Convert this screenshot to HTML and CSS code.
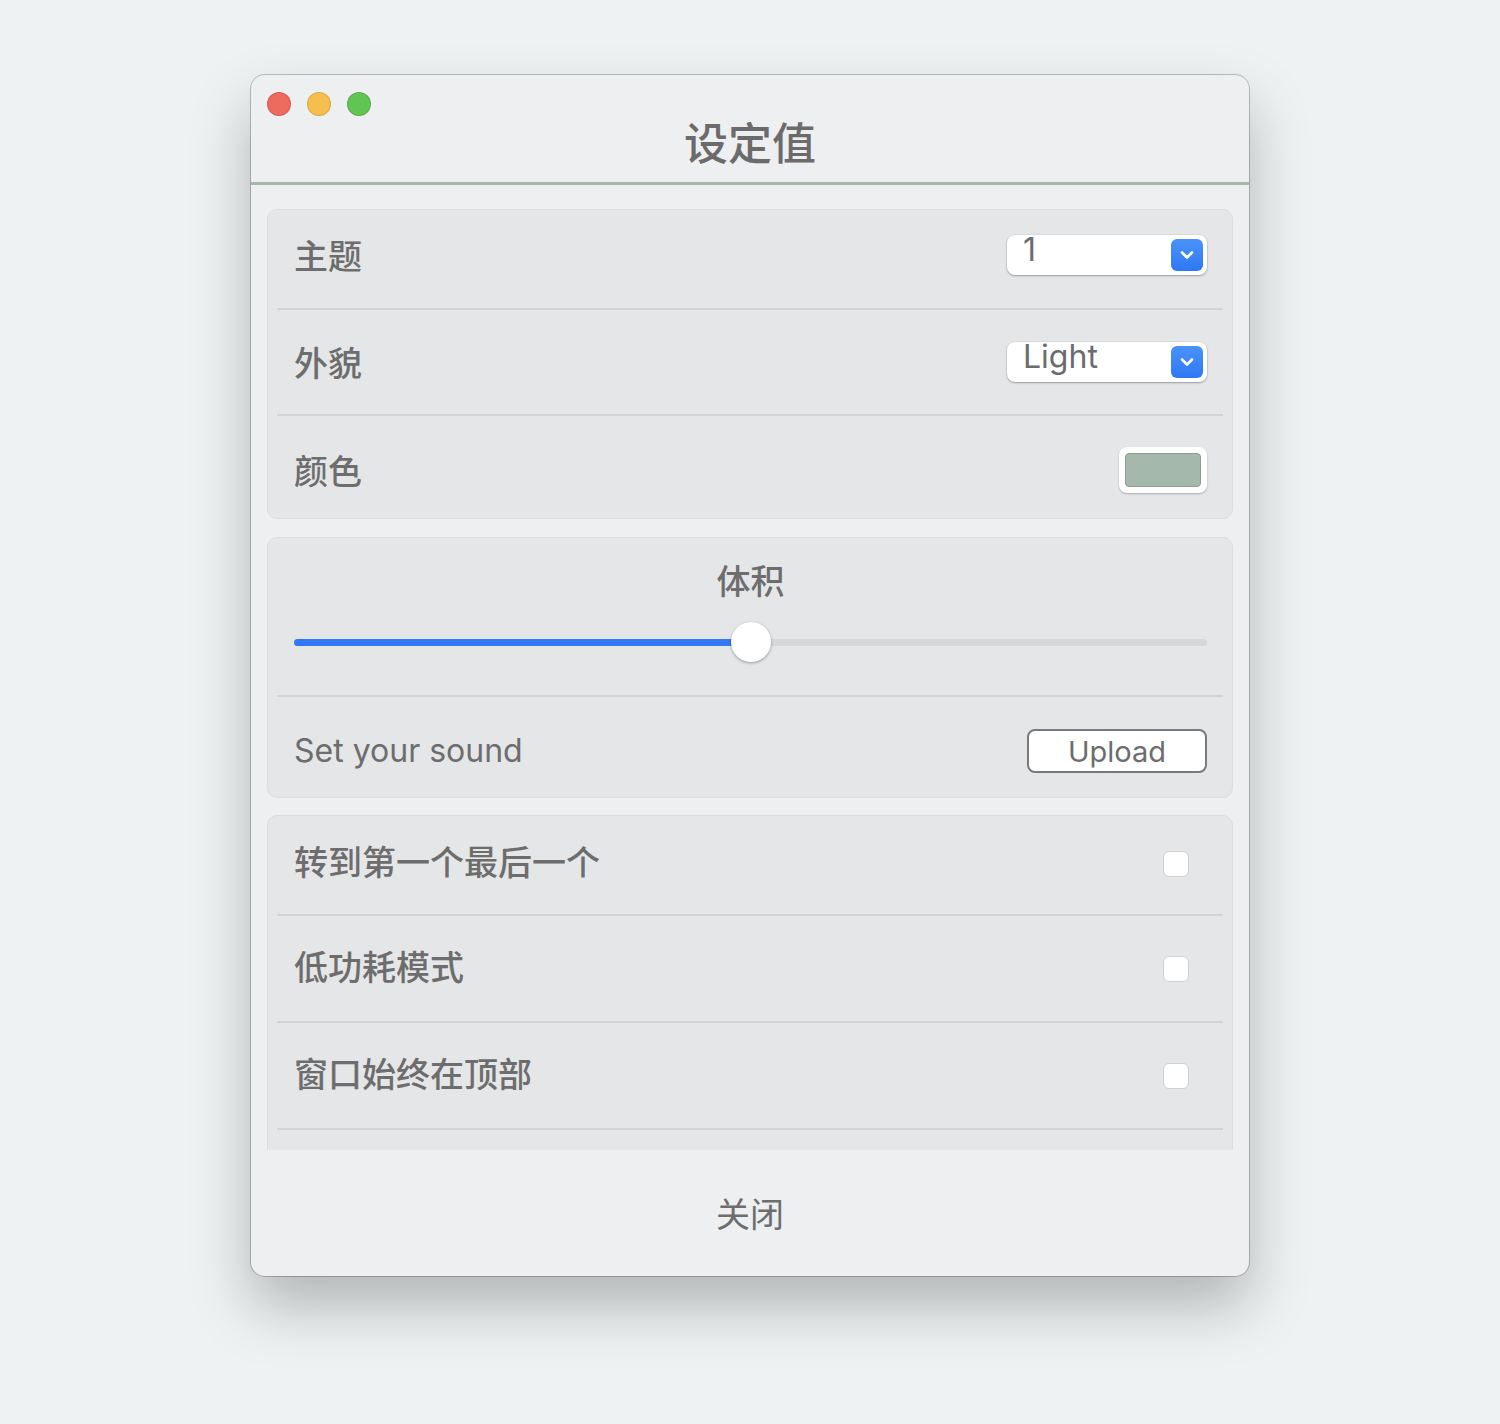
FILE: index.html
```html
<!DOCTYPE html>
<html lang="zh">
<head>
  <meta charset="UTF-8">
  <title>设定值</title>
  <link rel="stylesheet" href="styles.css">
</head>
<body>
  <div class="window">
    <div class="header">
      <div class="lights">
        <span class="light red"></span>
        <span class="light yellow"></span>
        <span class="light green"></span>
      </div>
      <h1 class="title">设定值</h1>
    </div>

    <div class="content">
      <div class="section">
        <div class="row">
          <span class="label">主题</span>
          <div class="select">
            <span class="select-value">1</span>
            <span class="select-arrow">
              <svg width="18" height="12" viewBox="0 0 18 12"><path d="M4 3.5l5 5 5-5" fill="none" stroke="#fff" stroke-width="2.6" stroke-linecap="round" stroke-linejoin="round"/></svg>
            </span>
          </div>
        </div>
        <div class="row">
          <span class="label">外貌</span>
          <div class="select">
            <span class="select-value">Light</span>
            <span class="select-arrow">
              <svg width="18" height="12" viewBox="0 0 18 12"><path d="M4 3.5l5 5 5-5" fill="none" stroke="#fff" stroke-width="2.6" stroke-linecap="round" stroke-linejoin="round"/></svg>
            </span>
          </div>
        </div>
        <div class="row">
          <span class="label">颜色</span>
          <div class="swatch"><span class="swatch-fill"></span></div>
        </div>
      </div>

      <div class="section">
        <div class="volume">
          <span class="label">体积</span>
          <div class="slider">
            <div class="track"><div class="track-fill" style="width: 50%"></div></div>
            <span class="thumb" style="left: 50%"></span>
          </div>
        </div>
        <div class="row sound">
          <span class="label latin">Set your sound</span>
          <button class="upload">Upload</button>
        </div>
      </div>

      <div class="section checks">
        <div class="row">
          <span class="label">转到第一个最后一个</span>
          <span class="check"></span>
        </div>
        <div class="row">
          <span class="label">低功耗模式</span>
          <span class="check"></span>
        </div>
        <div class="row">
          <span class="label">窗口始终在顶部</span>
          <span class="check"></span>
        </div>
        <div class="row"></div>
      </div>
    </div>

    <div class="footer">
      <span class="label">关闭</span>
    </div>
  </div>
</body>
</html>
```

FILE: styles.css
```css
body {
  margin: 0;
  min-height: 1424px;
  padding-top: 75px;
  box-sizing: border-box;
  background: #eff2f3;
  font-family: Inter, "Noto Sans CJK SC", sans-serif;
  color: #6d6d6d;
}
.window {
  width: 998px;
  height: 1201px;
  margin: 0 auto;
  background: #eeeff1;
  border-radius: 14px;
  box-shadow: 0 0 0 1px rgba(0, 0, 0, 0.22), 0 30px 60px rgba(0, 0, 0, 0.26);
  display: flex;
  flex-direction: column;
  overflow: hidden;
}
.header {
  height: 90px;
  padding: 17px 16px 0;
  border-bottom: 3px solid #a4b9ac;
}
.lights {
  display: flex;
  gap: 16px;
}
.light {
  width: 22px;
  height: 22px;
  border-radius: 50%;
  border: 1px solid rgba(0, 0, 0, 0.12);
}
.red { background: #ee6a5f; }
.yellow { background: #f5be4f; }
.green { background: #61c554; }
.title {
  margin: 0;
  text-align: center;
  font-family: "Noto Sans CJK SC", sans-serif;
  font-size: 44px;
  font-weight: 500;
  line-height: 50px;
  color: #6b6b6b;
}
.content {
  height: 965px;
  padding: 24px 16px 0;
  box-sizing: border-box;
  overflow: hidden;
  display: flex;
  flex-direction: column;
  gap: 17px;
}
.section {
  background: #e5e6e8;
  border: 1px solid #dcdddf;
  border-radius: 10px;
  flex-shrink: 0;
}
.content .section:first-child {
  margin-bottom: 1px;
}
.row {
  display: flex;
  align-items: center;
  justify-content: space-between;
  height: 104px;
  margin: 0 9px;
  padding: 0 16px 0 17px;
  border-bottom: 2px solid #d2d3d5;
}
.row:first-child {
  height: 90px;
  padding-bottom: 8px;
}
.row:last-child {
  border-bottom: none;
  height: 96px;
  padding-top: 6px;
}
.row.sound {
  height: 92px;
  padding-top: 8px;
}
.checks .row {
  height: 105px;
}
.checks .row:first-child {
  height: 96px;
  padding-bottom: 2px;
}
.label {
  font-family: "Noto Sans CJK SC", sans-serif;
  font-size: 34px;
  font-weight: 500;
  line-height: 40px;
}
.checks .label {
  margin-top: -6px;
}
.label.latin {
  font-family: Inter, "Noto Sans CJK SC", sans-serif;
  font-size: 32px;
  font-weight: 400;
}
.select {
  width: 200px;
  height: 40px;
  background: #fff;
  border-radius: 8px;
  box-shadow: 0 1px 2px rgba(0, 0, 0, 0.3), 0 0 0 1px rgba(0, 0, 0, 0.04);
  display: flex;
  justify-content: space-between;
  align-items: flex-start;
  padding: 4px 4px 4px 16px;
  box-sizing: border-box;
}
.select-value {
  font-size: 32px;
  line-height: 32px;
  margin-top: -5px;
  color: #6c6c6c;
}
.select-arrow {
  width: 32px;
  height: 32px;
  border-radius: 6px;
  background: linear-gradient(#4b93f9, #2f77f4);
  display: flex;
  align-items: center;
  justify-content: center;
}
.swatch {
  width: 88px;
  height: 46px;
  background: #fff;
  border-radius: 8px;
  box-shadow: 0 1px 2px rgba(0, 0, 0, 0.25);
  display: flex;
  align-items: center;
  justify-content: center;
}
.swatch-fill {
  width: 74px;
  height: 32px;
  background: #a4b9ac;
  border: 1px solid #8a9e91;
  border-radius: 4px;
}
.volume {
  height: 159px;
  margin: 0 9px;
  padding: 22px 16px 0 17px;
  box-sizing: border-box;
  border-bottom: 2px solid #d2d3d5;
  display: flex;
  flex-direction: column;
  align-items: center;
  gap: 22px;
}
.slider {
  position: relative;
  width: 100%;
  height: 40px;
  display: flex;
  align-items: center;
}
.track {
  width: 100%;
  height: 7px;
  border-radius: 4px;
  background: #d6d7d9;
  overflow: hidden;
}
.track-fill {
  height: 100%;
  background: #3478f6;
}
.thumb {
  position: absolute;
  top: 0;
  width: 40px;
  height: 40px;
  margin-left: -20px;
  border-radius: 50%;
  background: #fff;
  box-shadow: 0 1px 3px rgba(0, 0, 0, 0.35);
}
.upload {
  width: 180px;
  height: 44px;
  background: #fff;
  border: 2px solid #7a7a7a;
  border-radius: 8px;
  font-family: Inter, sans-serif;
  font-size: 29px;
  color: #6d6d6d;
  padding: 0;
}
.check {
  width: 24px;
  height: 24px;
  margin-right: 18px;
  background: #fff;
  border: 1px solid #cfcfcf;
  border-radius: 6px;
}
.footer {
  flex: 1;
  display: flex;
  align-items: center;
  justify-content: center;
}
.footer .label {
  font-weight: 400;
}
```
